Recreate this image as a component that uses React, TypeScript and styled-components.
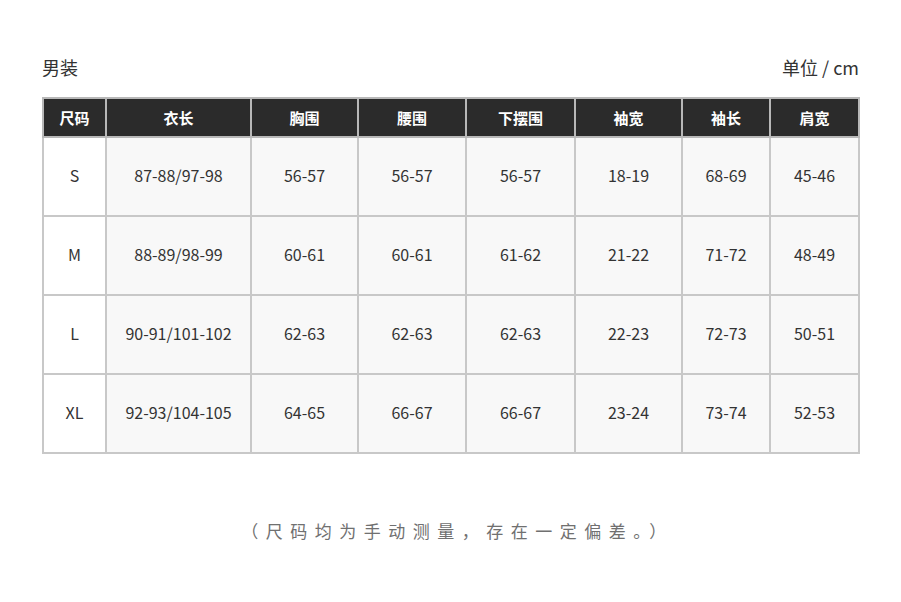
import React from "react";
import styled, {createGlobalStyle} from "styled-components";

const GlobalStyle = createGlobalStyle`
  body {
    margin: 0;
    background: #ffffff;
    font-family: "Noto Sans CJK SC", "Noto Sans", sans-serif;
  }
`

const columns = [
    {title: "尺码", width: 63},
    {title: "衣长", width: 145},
    {title: "胸围", width: 107},
    {title: "腰围", width: 108},
    {title: "下摆围", width: 109},
    {title: "袖宽", width: 107},
    {title: "袖长", width: 88},
    {title: "肩宽", width: 89},
]

const rows = [
    ["S", "87-88/97-98", "56-57", "56-57", "56-57", "18-19", "68-69", "45-46"],
    ["M", "88-89/98-99", "60-61", "60-61", "61-62", "21-22", "71-72", "48-49"],
    ["L", "90-91/101-102", "62-63", "62-63", "62-63", "22-23", "72-73", "50-51"],
    ["XL", "92-93/104-105", "64-65", "66-67", "66-67", "23-24", "73-74", "52-53"],
]

export default function App() {
    return (
        <>
            <GlobalStyle/>
            <Page>
                <TopBar>
                    <Label>男装</Label>
                    <Label>单位 / cm</Label>
                </TopBar>
                <SizeTable>
                    <colgroup>
                        {columns.map(c => <col key={c.title} style={{width: c.width}}/>)}
                    </colgroup>
                    <thead>
                    <tr>
                        {columns.map(c => <HeadCell key={c.title}>{c.title}</HeadCell>)}
                    </tr>
                    </thead>
                    <tbody>
                    {rows.map(r => (
                        <tr key={r[0]}>
                            {r.map((v, i) => <Cell key={i} $first={i === 0}>{v}</Cell>)}
                        </tr>
                    ))}
                    </tbody>
                </SizeTable>
                <Note>（尺码均为手动测量，存在一定偏差。）</Note>
            </Page>
        </>
    )
}

const Page = styled.div`
  width: 901px;
  height: 602px;
  box-sizing: border-box;
  padding: 53px 42px 0 42px;
`

const TopBar = styled.div`
  display: flex;
  justify-content: space-between;
  align-items: center;
  height: 28px;
  margin-bottom: 16px;
`

const Label = styled.div`
  font-size: 18px;
  color: #333333;
`

const SizeTable = styled.table`
  width: 817px;
  border-collapse: collapse;
  table-layout: fixed;
  border: 2px solid #c4c4c4;
`

const HeadCell = styled.th`
  height: 37px;
  padding: 0;
  background: #2b2b2b;
  color: #ffffff;
  font-size: 15px;
  font-weight: 700;
  border: 2px solid #b8b8b8;
  text-align: center;
`

const Cell = styled.td<{ $first?: boolean }>`
  height: 74px;
  padding: 0 0 3px 0;
  background: ${p => p.$first ? "#ffffff" : "#f8f8f8"};
  color: #333333;
  font-size: 16px;
  border: 2px solid #c8c8c8;
  text-align: center;
`

const Note = styled.div`
  margin-top: 64px;
  padding-left: 14px;
  text-align: center;
  font-size: 17px;
  letter-spacing: 7.5px;
  color: #707070;
`
